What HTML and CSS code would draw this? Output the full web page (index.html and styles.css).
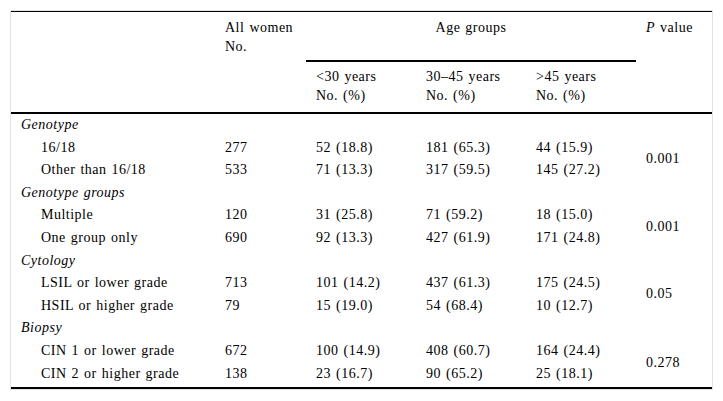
FILE: index.html
```html
<!DOCTYPE html>
<html lang="en">
<head>
<meta charset="utf-8">
<title>Table</title>
<link rel="stylesheet" href="styles.css">
</head>
<body>
<div class="frame">
<table class="data">
  <colgroup>
    <col class="c-stub"><col class="c-all"><col class="c-age"><col class="c-age"><col class="c-age"><col class="c-p">
  </colgroup>
  <thead>
    <tr class="h1">
      <th class="span2" rowspan="2"></th>
      <th class="span2" rowspan="2">All women<br>No.</th>
      <th class="group" colspan="3">Age groups</th>
      <th class="span2" rowspan="2"><i>P</i> value</th>
    </tr>
    <tr class="h2">
      <th class="sub">&lt;30 years<br>No. (%)</th>
      <th class="sub">30–45 years<br>No. (%)</th>
      <th class="sub">&gt;45 years<br>No. (%)</th>
    </tr>
  </thead>
  <tbody>
    <tr><td class="cat">Genotype</td><td></td><td></td><td></td><td></td><td></td></tr>
    <tr><td class="item">16/18</td><td>277</td><td>52 (18.8)</td><td>181 (65.3)</td><td>44 (15.9)</td><td class="pv" rowspan="2">0.001</td></tr>
    <tr><td class="item">Other than 16/18</td><td>533</td><td>71 (13.3)</td><td>317 (59.5)</td><td>145 (27.2)</td></tr>
    <tr><td class="cat">Genotype groups</td><td></td><td></td><td></td><td></td><td></td></tr>
    <tr><td class="item">Multiple</td><td>120</td><td>31 (25.8)</td><td>71 (59.2)</td><td>18 (15.0)</td><td class="pv" rowspan="2">0.001</td></tr>
    <tr><td class="item">One group only</td><td>690</td><td>92 (13.3)</td><td>427 (61.9)</td><td>171 (24.8)</td></tr>
    <tr><td class="cat">Cytology</td><td></td><td></td><td></td><td></td><td></td></tr>
    <tr><td class="item">LSIL or lower grade</td><td>713</td><td>101 (14.2)</td><td>437 (61.3)</td><td>175 (24.5)</td><td class="pv" rowspan="2">0.05</td></tr>
    <tr><td class="item">HSIL or higher grade</td><td>79</td><td>15 (19.0)</td><td>54 (68.4)</td><td>10 (12.7)</td></tr>
    <tr><td class="cat">Biopsy</td><td></td><td></td><td></td><td></td><td></td></tr>
    <tr><td class="item">CIN 1 or lower grade</td><td>672</td><td>100 (14.9)</td><td>408 (60.7)</td><td>164 (24.4)</td><td class="pv" rowspan="2">0.278</td></tr>
    <tr class="last"><td class="item">CIN 2 or higher grade</td><td>138</td><td>23 (16.7)</td><td>90 (65.2)</td><td>25 (18.1)</td></tr>
  </tbody>
</table>
</div>
</body>
</html>
```

FILE: styles.css
```css
html, body {
  margin: 0;
  padding: 0;
  background: #fff;
}

.frame {
  margin: 10px;
  width: 701px;
  border: 1px solid #e2e2e2;
  box-sizing: content-box;
}

.data {
  width: 701px;
  table-layout: fixed;
  border-collapse: separate;
  border-spacing: 0;
  border-top: 1px solid #000;
  border-bottom: 2px solid #000;
  font-family: "Liberation Serif", "Times New Roman", serif;
  font-size: 14px;
  letter-spacing: 0.5px;
  word-spacing: 1px;
  color: #000;
}

.c-stub { width: 204px; }
.c-all { width: 91px; }
.c-age { width: 110px; }
.c-p { width: 76px; }

.data th {
  font-weight: normal;
  text-align: left;
  vertical-align: top;
  line-height: 19px;
  padding: 6px 10px 0 10px;
}

.data th.span2 {
  border-bottom: 2px solid #000;
}

.data th.group {
  text-align: center;
  padding: 6px 10px 23px 10px;
  border-bottom: 2px solid #000;
}

.data th.sub {
  padding: 5px 10px 7px 10px;
  border-bottom: 2px solid #000;
}

.data td {
  line-height: 16.6px;
  padding: 3px 10px;
  vertical-align: top;
  white-space: nowrap;
}

.data tr.last td {
  padding-bottom: 5px;
}

.data td.cat {
  font-style: italic;
}

.data td.item {
  padding-left: 30px;
}

.data td.pv {
  vertical-align: middle;
}
```
